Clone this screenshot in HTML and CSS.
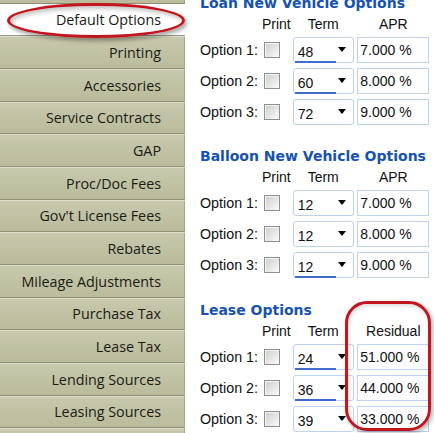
FILE: index.html
```html
<!DOCTYPE html>
<html>
<head>
<meta charset="utf-8">
<link rel="stylesheet" href="styles.css">
</head>
<body>
<div class="page">
  <nav class="side">
    <div class="tab"></div>
    <div class="tab sel-tab">Default Options</div>
    <div class="tab">Printing</div>
    <div class="tab">Accessories</div>
    <div class="tab">Service Contracts</div>
    <div class="tab">GAP</div>
    <div class="tab">Proc/Doc Fees</div>
    <div class="tab">Gov't License Fees</div>
    <div class="tab">Rebates</div>
    <div class="tab">Mileage Adjustments</div>
    <div class="tab">Purchase Tax</div>
    <div class="tab">Lease Tax</div>
    <div class="tab">Lending Sources</div>
    <div class="tab">Leasing Sources</div>
    <div class="tab"></div>
  </nav>
  <main class="content">
    <section class="opt">
      <h2>Loan New Vehicle Options</h2>
      <div class="grid">
        <span></span><span class="hd">Print</span><span class="hd">Term</span><span class="hd hd-in">APR</span>
        <span class="lbl">Option 1:</span><span class="cb"></span><div class="sel u"><span class="val">48</span><i class="arr"></i></div><div class="inp">7.000 %</div>
        <span class="lbl">Option 2:</span><span class="cb"></span><div class="sel u"><span class="val">60</span><i class="arr"></i></div><div class="inp">8.000 %</div>
        <span class="lbl">Option 3:</span><span class="cb"></span><div class="sel"><span class="val">72</span><i class="arr"></i></div><div class="inp">9.000 %</div>
      </div>
    </section>
    <section class="opt">
      <h2>Balloon New Vehicle Options</h2>
      <div class="grid">
        <span></span><span class="hd">Print</span><span class="hd">Term</span><span class="hd hd-in">APR</span>
        <span class="lbl">Option 1:</span><span class="cb"></span><div class="sel"><span class="val">12</span><i class="arr"></i></div><div class="inp">7.000 %</div>
        <span class="lbl">Option 2:</span><span class="cb"></span><div class="sel"><span class="val">12</span><i class="arr"></i></div><div class="inp">8.000 %</div>
        <span class="lbl">Option 3:</span><span class="cb"></span><div class="sel u"><span class="val">12</span><i class="arr"></i></div><div class="inp">9.000 %</div>
      </div>
    </section>
    <section class="opt">
      <h2>Lease Options</h2>
      <div class="grid">
        <span></span><span class="hd">Print</span><span class="hd">Term</span><span class="hd hd-in">Residual</span>
        <span class="lbl">Option 1:</span><span class="cb"></span><div class="sel u"><span class="val">24</span><i class="arr"></i></div><div class="inp">51.000 %</div>
        <span class="lbl">Option 2:</span><span class="cb"></span><div class="sel u"><span class="val">36</span><i class="arr"></i></div><div class="inp">44.000 %</div>
        <span class="lbl">Option 3:</span><span class="cb"></span><div class="sel"><span class="val">39</span><i class="arr"></i></div><div class="inp">33.000 %</div>
      </div>
    </section>
  </main>
  <div class="mark mark-tab"></div>
  <div class="mark mark-col"></div>
</div>
</body>
</html>
```

FILE: styles.css
```css
html, body {
  margin: 0;
  padding: 0;
  background: #ffffff;
}
body {
  width: 434px;
  height: 433px;
  overflow: hidden;
}
.page {
  position: relative;
  display: flex;
  align-items: flex-start;
  width: 434px;
  height: 433px;
  overflow: hidden;
}
.side {
  width: 185px;
  flex: none;
  margin-top: -29px;
  display: flex;
  flex-direction: column;
}
.tab {
  box-sizing: border-box;
  height: 32.67px;
  padding-right: 24px;
  display: flex;
  align-items: center;
  justify-content: flex-end;
  font-family: "Open Sans", "Noto Sans", sans-serif;
  font-size: 14.3px;
  color: #1b1b14;
  background: linear-gradient(#c8c9ad, #b9bb9b);
  border-top: 1px solid #dcdccb;
  border-bottom: 1px solid #8e8f76;
  box-shadow: inset -1px 0 #a6a78b;
  white-space: nowrap;
}
.tab.sel-tab {
  background: #ffffff;
  border-top-color: #ffffff;
  border-bottom-color: #9c9c8c;
  box-shadow: none;
}
.content {
  margin-top: -6.5px;
  padding-left: 15px;
  font-family: "Liberation Sans", Arial, sans-serif;
  font-size: 14px;
  color: #111;
}
.opt {
  margin-bottom: 22.5px;
}
.opt h2 {
  margin: 0;
  height: 18px;
  line-height: 18px;
  font-family: "DejaVu Sans", Verdana, sans-serif;
  font-weight: bold;
  font-size: 14px;
  color: #1552b2;
  white-space: nowrap;
}
.grid {
  margin-top: 4px;
  display: grid;
  grid-template-columns: 60px 32.7px 61px 75.6px;
  grid-template-rows: 16px 26px 26px 26px;
  row-gap: 5px;
  align-items: center;
}
.hd {
  line-height: 16px;
  text-align: center;
  white-space: nowrap;
}
.hd-in {
  padding-left: 3.6px;
}
.lbl {
  white-space: nowrap;
  line-height: 16px;
  font-size: 14.3px;
}
.cb {
  box-sizing: border-box;
  width: 16px;
  height: 16px;
  margin-left: 4px;
  border: 1px solid #8e8f8f;
  background: linear-gradient(135deg, #cbcccc 0%, #e6e6e6 55%, #fbfbfb 100%);
  box-shadow: inset 1px 1px 0 #f4f4f4;
}
.sel {
  position: relative;
  box-sizing: border-box;
  height: 26px;
  display: flex;
  align-items: center;
  justify-content: space-between;
  padding: 0 6.5px 0 4px;
  border: 1px solid #bcd2f0;
  border-radius: 3px;
  background: #fff;
}
.sel .val {
  padding-top: 4px;
  line-height: 16px;
}
.sel .arr {
  width: 0;
  height: 0;
  margin-bottom: 1px;
  border-left: 4.5px solid transparent;
  border-right: 4.5px solid transparent;
  border-top: 5px solid #000;
}
.sel.u::after {
  content: "";
  position: absolute;
  left: 1px;
  bottom: -1px;
  width: 41px;
  height: 2px;
  background: #3f6ccc;
}
.inp {
  box-sizing: border-box;
  height: 26px;
  width: 72px;
  margin-left: 3.6px;
  padding-left: 2px;
  line-height: 24px;
  border: 1px solid #bfd3ee;
  background: #fff;
  white-space: nowrap;
}
.mark {
  position: absolute;
  box-sizing: border-box;
  border: 3px solid #c3151d;
}
.mark-tab {
  left: 7px;
  top: 3px;
  width: 178px;
  height: 35px;
  border-radius: 50%;
  box-shadow: 2px 3px 4px rgba(0, 0, 0, 0.35), inset 2px 3px 4px rgba(0, 0, 0, 0.22);
}
.mark-col {
  left: 345px;
  top: 301px;
  width: 86px;
  height: 130px;
  border-radius: 22px;
  border-width: 3.5px;
  box-shadow: 2px 2px 4px rgba(0, 0, 0, 0.3), inset 1px 2px 4px rgba(0, 0, 0, 0.15);
}
```
